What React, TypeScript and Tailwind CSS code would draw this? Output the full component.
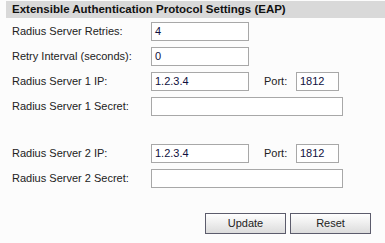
import type { ReactNode } from "react";

export default function App() {
  return (
    <div
      className="h-[243px] w-[385px] bg-[#fcfcfc] pt-px text-[11px] text-[#222]"
      style={{ fontFamily: '"Liberation Sans", Arial, sans-serif' }}
    >
      <div className="ml-[6px] flex h-[17px] items-center bg-[#d9d9d9] pl-[6px] text-[11.5px] font-bold text-[#111]">
        Extensible Authentication Protocol Settings (EAP)
      </div>

      <div className="mt-px pl-[12px]">
        <Row label="Radius Server Retries:">
          <Field value="4" width="w-[98px]" />
        </Row>
        <Row label="Retry Interval (seconds):">
          <Field value="0" width="w-[98px]" />
        </Row>
        <Row label="Radius Server 1 IP:">
          <Field value="1.2.3.4" width="w-[98px]" />
          <span className="ml-[15px] w-[32px]">Port:</span>
          <Field value="1812" width="w-[43px]" />
        </Row>
        <Row label="Radius Server 1 Secret:">
          <Field value="" width="w-[192px]" />
        </Row>

        <div className="h-[22px]" />

        <Row label="Radius Server 2 IP:">
          <Field value="1.2.3.4" width="w-[98px]" />
          <span className="ml-[15px] w-[32px]">Port:</span>
          <Field value="1812" width="w-[43px]" />
        </Row>
        <Row label="Radius Server 2 Secret:">
          <Field value="" width="w-[192px]" />
        </Row>
      </div>

      <div className="mt-[22px] flex justify-end gap-[4px] pr-[14px]">
        <button className="h-[21px] w-[81px] border border-[#5c5c6c] bg-gradient-to-b from-white to-[#dcdcdc] text-[11px] text-[#222]">
          Update
        </button>
        <button className="h-[21px] w-[81px] border border-[#5c5c6c] bg-gradient-to-b from-white to-[#dcdcdc] text-[11px] text-[#222]">
          Reset
        </button>
      </div>
    </div>
  );
}

function Row({ label, children }: { label: string; children: ReactNode }) {
  return (
    <div className="flex h-[25px] items-center">
      <span className="w-[139px] shrink-0">{label}</span>
      {children}
    </div>
  );
}

function Field({ value, width }: { value: string; width: string }) {
  return (
    <div className={`${width} flex h-[19px] items-center border border-[#a8a8a8] bg-white px-[3px] text-[11px] text-[#101040]`}>
      {value}
    </div>
  );
}
